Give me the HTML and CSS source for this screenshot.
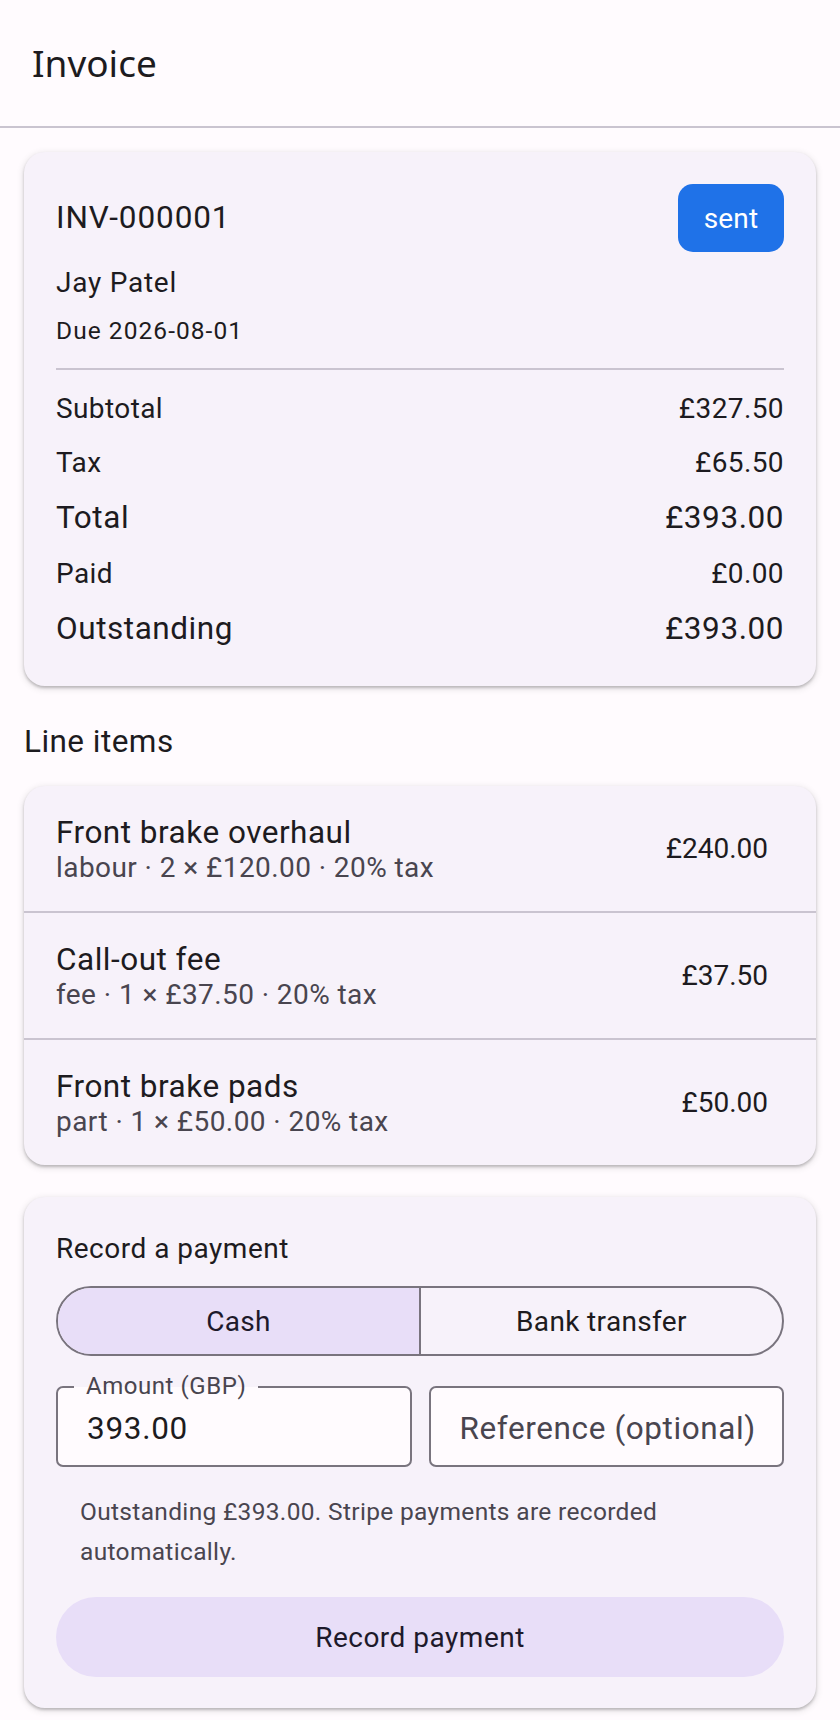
FILE: index.html
```html
<!DOCTYPE html>
<html lang="en">
<head>
<meta charset="utf-8">
<title>Invoice</title>
<link rel="stylesheet" href="styles.css">
</head>
<body>
<header class="appbar">
  <h1 class="appbar-title">Invoice</h1>
</header>
<main class="content">
  <section class="card summary">
    <div class="summary-head">
      <span class="inv-number">INV-000001</span>
      <span class="badge">sent</span>
    </div>
    <div class="customer">Jay Patel</div>
    <div class="due">Due 2026-08-01</div>
    <div class="divider"></div>
    <div class="totals">
      <div class="total-row"><span>Subtotal</span><span>£327.50</span></div>
      <div class="total-row"><span>Tax</span><span>£65.50</span></div>
      <div class="total-row total-row-lg"><span>Total</span><span>£393.00</span></div>
      <div class="total-row"><span>Paid</span><span>£0.00</span></div>
      <div class="total-row total-row-lg"><span>Outstanding</span><span>£393.00</span></div>
    </div>
  </section>

  <h2 class="section-title">Line items</h2>

  <section class="card items">
    <div class="item">
      <div class="item-text">
        <div class="item-title">Front brake overhaul</div>
        <div class="item-sub">labour · 2 × £120.00 · 20% tax</div>
      </div>
      <div class="item-amount">£240.00</div>
    </div>
    <div class="item">
      <div class="item-text">
        <div class="item-title">Call-out fee</div>
        <div class="item-sub">fee · 1 × £37.50 · 20% tax</div>
      </div>
      <div class="item-amount">£37.50</div>
    </div>
    <div class="item">
      <div class="item-text">
        <div class="item-title">Front brake pads</div>
        <div class="item-sub">part · 1 × £50.00 · 20% tax</div>
      </div>
      <div class="item-amount">£50.00</div>
    </div>
  </section>

  <section class="card payment">
    <div class="payment-title">Record a payment</div>
    <div class="segmented">
      <div class="segment segment-selected">Cash</div>
      <div class="segment">Bank transfer</div>
    </div>
    <div class="fields">
      <div class="field">
        <span class="field-label">Amount (GBP)</span>
        <span class="field-value">393.00</span>
      </div>
      <div class="field">
        <span class="field-placeholder">Reference (optional)</span>
      </div>
    </div>
    <p class="helper">Outstanding £393.00. Stripe payments are recorded automatically.</p>
    <div class="primary-button">Record payment</div>
  </section>
</main>
</body>
</html>
```

FILE: styles.css
```css
* {
  box-sizing: border-box;
}

html, body {
  margin: 0;
  padding: 0;
  background: #fffbfe;
}

body {
  font-family: Roboto, "Liberation Sans", Arial, sans-serif;
  color: #1d1b20;
}

.appbar {
  height: 128px;
  display: flex;
  align-items: center;
  padding: 0 28px 0 32px;
  border-bottom: 2px solid #cac4d0;
  background: #fffbfe;
}

.appbar-title {
  margin: 0;
  font-family: "Noto Sans", "Open Sans", sans-serif;
  font-weight: 400;
  font-size: 37px;
  line-height: 50px;
  color: #1d1b20;
}

.content {
  padding: 24px 24px 12px;
  display: flex;
  flex-direction: column;
}

.card {
  background: #f7f2fa;
  border-radius: 21px;
  box-shadow: 0 2px 3px rgba(0, 0, 0, 0.22), 0 2px 6px 2px rgba(0, 0, 0, 0.08);
}

/* Summary card */
.summary {
  padding: 32px 32px 37px;
}

.summary-head {
  display: flex;
  align-items: center;
  justify-content: space-between;
  height: 68px;
}

.inv-number {
  font-size: 31.5px;
  line-height: 40px;
  letter-spacing: 0.9px;
}

.badge {
  display: flex;
  align-items: center;
  justify-content: center;
  width: 106px;
  height: 68px;
  border-radius: 15px;
  background: #1f72e8;
  color: #ffffff;
  font-size: 28px;
  letter-spacing: 0.2px;
}

.customer {
  margin-top: 13px;
  font-size: 28px;
  line-height: 36px;
  letter-spacing: 0.75px;
}

.due {
  margin-top: 14px;
  font-size: 24.5px;
  line-height: 32px;
  letter-spacing: 1.05px;
}

.divider {
  margin-top: 21px;
  height: 2px;
  background: #cac4d0;
}

.totals {
  margin-top: 21px;
  display: flex;
  flex-direction: column;
  gap: 17.5px;
}

.total-row {
  display: flex;
  justify-content: space-between;
  font-size: 28px;
  line-height: 36px;
  letter-spacing: 0.4px;
}

.total-row-lg {
  font-size: 31.5px;
  line-height: 40px;
  letter-spacing: 0.55px;
}

/* Section title */
.section-title {
  margin: 36px 0 24px;
  font-weight: 400;
  font-size: 31.5px;
  line-height: 40px;
  letter-spacing: 0.45px;
}

/* Line items */
.item {
  display: flex;
  align-items: center;
  justify-content: space-between;
  height: 125px;
  padding: 0 48px 0 32px;
}

.item + .item {
  border-top: 2px solid #cac4d0;
  height: 127px;
}

.item-title {
  font-size: 31.5px;
  line-height: 38px;
  letter-spacing: 0.5px;
}

.item-sub {
  font-size: 28px;
  line-height: 32px;
  letter-spacing: 0.43px;
  color: #49454f;
}

.item-amount {
  font-size: 28px;
  letter-spacing: 0;
}

/* Payment card */
.payment {
  margin-top: 32px;
  padding: 32px 32px 31px;
}

.payment-title {
  font-size: 28px;
  line-height: 40px;
  letter-spacing: 0.5px;
}

.segmented {
  margin-top: 17px;
  height: 70px;
  display: flex;
  border: 2px solid #79747e;
  border-radius: 35px;
  overflow: hidden;
}

.segment {
  flex: 1;
  display: flex;
  align-items: center;
  justify-content: center;
  font-size: 28px;
  letter-spacing: 0.35px;
  color: #1d1b20;
}

.segment + .segment {
  border-left: 2px solid #79747e;
}

.segment-selected {
  background: #e8def8;
  color: #1d192b;
}

.fields {
  margin-top: 30px;
  display: flex;
  gap: 17px;
}

.field {
  position: relative;
  flex: 1;
  min-width: 0;
  height: 81px;
  display: flex;
  align-items: center;
  padding: 5px 6px 0 29px;
  border: 2px solid #79747e;
  border-radius: 7px;
  background: #fffbfe;
  white-space: nowrap;
  overflow: visible;
}

.field-label {
  position: absolute;
  left: 16px;
  top: -16px;
  padding: 0 12px;
  font-size: 24px;
  line-height: 28px;
  letter-spacing: 0.55px;
  color: #49454f;
  background: linear-gradient(to bottom, #f7f2fa 0, #f7f2fa 15px, #fffbfe 15px);
}

.field-value {
  font-size: 31.5px;
  line-height: 40px;
  letter-spacing: 0.7px;
  color: #1d1b20;
}

.field-placeholder {
  font-size: 31.5px;
  line-height: 40px;
  letter-spacing: 0.6px;
  color: #49454f;
  white-space: nowrap;
}

.helper {
  margin: 25px 0 0;
  padding: 0 24px;
  font-size: 24.5px;
  line-height: 40px;
  letter-spacing: 0.33px;
  color: #49454f;
}

.primary-button {
  margin-top: 25px;
  height: 80px;
  display: flex;
  align-items: center;
  justify-content: center;
  border-radius: 40px;
  background: #e8def8;
  color: #1d192b;
  font-size: 28px;
  letter-spacing: 0.5px;
}
```
